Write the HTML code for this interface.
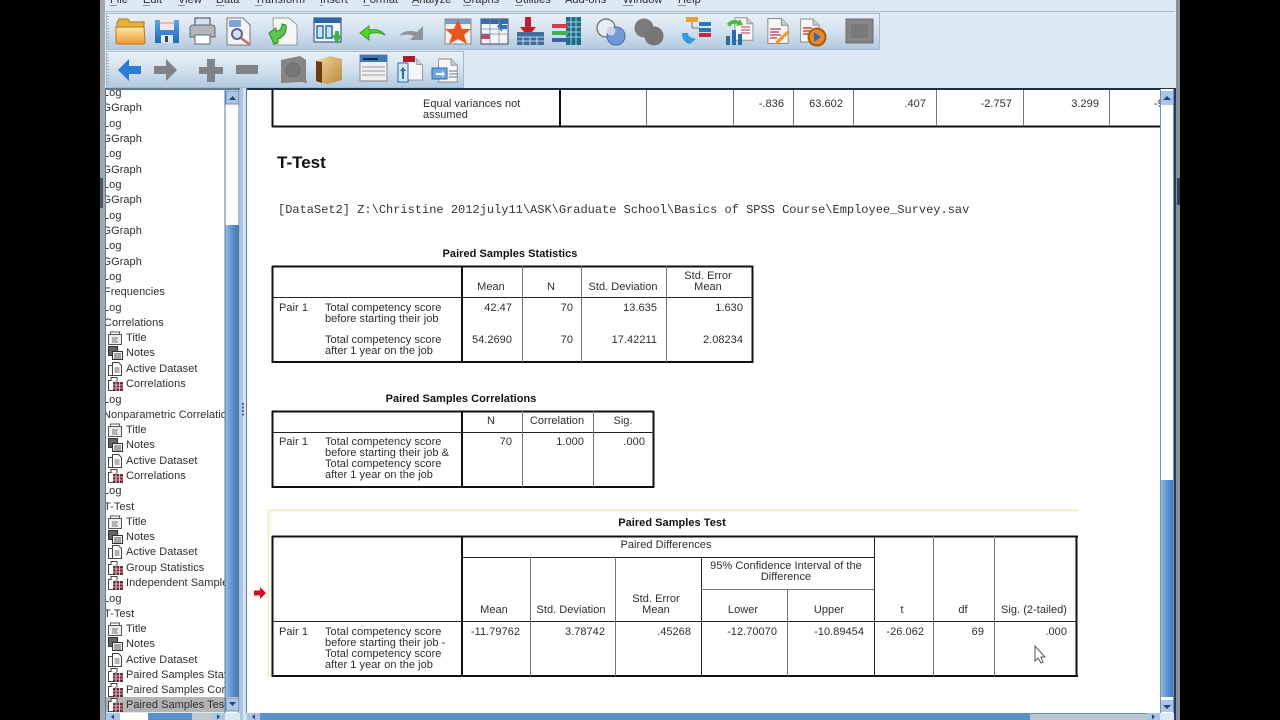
<!DOCTYPE html>
<html><head><meta charset="utf-8"><style>
html,body{margin:0;padding:0;background:#000;width:1280px;height:720px;overflow:hidden}
svg{display:block;filter:blur(.35px)}
text{font-family:"Liberation Sans",sans-serif;font-size:11px;fill:#2e2e2e;letter-spacing:.04px}
.e{text-anchor:end}.m{text-anchor:middle}
.b{font-weight:bold;fill:#111}
.k line{stroke:#111;stroke-width:2}
.h line{stroke:#222;stroke-width:1}
.g line{stroke:#777;stroke-width:1}
</style></head><body>
<svg width="1280" height="720" viewBox="0 0 1280 720" xmlns="http://www.w3.org/2000/svg">
<defs>
<linearGradient id="tb" x1="0" y1="0" x2="0" y2="1"><stop offset="0" stop-color="#e9f1f8"/><stop offset=".5" stop-color="#d3e1ee"/><stop offset="1" stop-color="#b2c9de"/></linearGradient>
<linearGradient id="sb" x1="0" y1="0" x2="1" y2="0"><stop offset="0" stop-color="#9cc0e2"/><stop offset=".5" stop-color="#5f95cd"/><stop offset="1" stop-color="#3f78b8"/></linearGradient>
<linearGradient id="or" x1="0" y1="0" x2="0" y2="1"><stop offset="0" stop-color="#ffe9a8"/><stop offset="1" stop-color="#f09a30"/></linearGradient>
<linearGradient id="bl" x1="0" y1="0" x2="0" y2="1"><stop offset="0" stop-color="#5aa6e6"/><stop offset="1" stop-color="#1f6ab4"/></linearGradient>
<linearGradient id="bk" x1="0" y1="0" x2="1" y2="1"><stop offset="0" stop-color="#f0d9a0"/><stop offset="1" stop-color="#b98a3e"/></linearGradient>
<symbol id="i-title" viewBox="0 0 16 14" width="16" height="14"><rect x="0.5" y="3.5" width="13" height="10" fill="#eee" stroke="#555"/><path d="M2.5 3.500V1h9v2.500" fill="none" stroke="#555"/><path d="M4 7h6M4 9h5M4 11h6" stroke="#777"/></symbol>
<symbol id="i-notes" viewBox="0 0 16 14" width="16" height="14"><rect x="0.5" y="0.5" width="9" height="9" fill="#666" stroke="#333"/><rect x="4.5" y="5.500" width="10" height="8" fill="#f4f4f4" stroke="#333"/><path d="M6 8h7M6 10h7M6 12h7" stroke="#555"/></symbol>
<symbol id="i-doc" viewBox="0 0 16 14" width="16" height="14"><rect x="0.5" y="3.500" width="7" height="10" fill="#fff" stroke="#444"/><path d="M4.500 11.500V0.500h6l3 3v10h-9z" fill="#fff" stroke="#444"/><path d="M6.500 6h5M6.500 8h5M6.500 10h5" stroke="#666"/></symbol>
<symbol id="i-tab" viewBox="0 0 16 14" width="16" height="14"><rect x="0.5" y="3.500" width="7" height="10" fill="#fff" stroke="#444"/><path d="M3 3.500V0.500h6v4" fill="#fff" stroke="#444"/><rect x="5" y="5" width="10" height="9" fill="#6e2a36"/><path d="M5 8h10M5 11h10M8 5v9M11.500 5v9" stroke="#f0d8dc" stroke-width=".8"/></symbol>
<symbol id="sheet" viewBox="0 0 26 28" width="26" height="28"><path d="M3 1h14l7 7v19H3z" fill="#f6f6f6" stroke="#8a8a8a"/><path d="M17 1v7h7" fill="#ccc" stroke="#8a8a8a"/></symbol>
</defs>

<rect width="1280" height="720" fill="#000"/>
<rect x="100" y="0" width="1080" height="720" fill="#dde9f4"/>
<rect x="100" y="0" width="5" height="720" fill="#a4a8ac"/>
<rect x="1176" y="0" width="4" height="720" fill="#8c9094"/>
<rect x="1174" y="88" width="2" height="632" fill="#223a66"/>
<rect x="1177" y="178" width="3" height="27" fill="#3c4048"/>
<rect x="100" y="178" width="3" height="30" fill="#555"/>

<!-- menu -->
<rect x="105" y="11" width="1070" height="1" fill="#a9bccd"/>
<text x="110" y="3">File</text><text x="143" y="3">Edit</text><text x="178" y="3">View</text><text x="216" y="3">Data</text><text x="255" y="3">Transform</text><text x="320" y="3">Insert</text><text x="363" y="3">Format</text><text x="412" y="3">Analyze</text><text x="463" y="3">Graphs</text><text x="515" y="3">Utilities</text><text x="565" y="3">Add-ons</text><text x="623" y="3">Window</text><text x="678" y="3">Help</text>
<path d="M110 5.500h7M143 5.500h7M178 5.500h7M216 5.500h8M255 5.500h7M320 5.500h3M363 5.500h7M412 5.500h7M463 5.500h8M515 5.500h8M623 5.500h10M678 5.500h8" stroke="#8a94a0"/>

<!-- toolbars -->
<rect x="106.500" y="13.500" width="773" height="36" fill="url(#tb)" stroke="#a8bacb"/>
<rect x="106.500" y="51.500" width="357" height="36" fill="url(#tb)" stroke="#a8bacb"/>
<path d="M108 16v31M108 54v31" stroke="#9db2c6" stroke-width="2" stroke-dasharray="1 2"/>

<!-- row 1 icons -->
<path d="M117 23l2-4h9l2 3h14v6h-27z" fill="#e8b13c" stroke="#a8761a"/><path d="M116 27h28l1 15a2 2 0 0 1-2 2h-25a2 2 0 0 1-2-2z" fill="url(#or)" stroke="#b8741a"/>
<path d="M155 20h24v23h-24z" fill="url(#bl)"/><rect x="160" y="19" width="14" height="11" fill="#f2e8e8"/><path d="M160 23h14" stroke="#d88"/><rect x="161" y="35" width="12" height="8" fill="#dfe6ee"/><rect x="165" y="36" width="3" height="6" fill="#345"/>
<path d="M195 18h15v9h-15z" fill="#cfe4f6" stroke="#445"/><path d="M190 28a3 3 0 0 1 3-3h19a3 3 0 0 1 3 3v9h-25z" fill="#b0b6bc" stroke="#666"/><rect x="195" y="35" width="15" height="9" fill="#fff" stroke="#666"/>
<path d="M227 18h16l7 7v20h-23z" fill="#f4f4f4" stroke="#777"/><rect x="229" y="20" width="12" height="7" fill="#7aa6d4"/><circle cx="237" cy="34" r="5" fill="#cfe2f6" stroke="#6a5a9a" stroke-width="2"/><path d="M241 38l8 6" stroke="#c2705a" stroke-width="2.400"/>
<path d="M273 18h16l8 7v20h-23z" fill="#f6f6f6" stroke="#999"/><path d="M269 33l7-5v3c4 0 6-2 6-7l4 1c1 8-3 12-8 14v4l-4 1z" fill="#5cc84a" stroke="#2f8a2a"/>
<rect x="314" y="18" width="27" height="24" fill="#f0f4f8" stroke="#22456e"/><rect x="314" y="18" width="27" height="5" fill="#2e64a8"/><path d="M317 26h6v12h-6zM326 26h6v12h-6z" fill="#cfe3f5" stroke="#1f6aa8" stroke-width="1.400"/><path d="M332 35h3v-4h4v4h3l-5 9-5-9z" fill="#3fb04a"/>
<path d="M360 33l9-7v4c7-1 12 0 16 5-6-3-10-3-16-1v6z" fill="#52d42c" stroke="#2f9e1e"/>
<path d="M423 26v14h-13l4-4c-5-2-9-2-15 0 4-5 10-6 18-4z" fill="#8f9498"/>
<rect x="445" y="19" width="26" height="25" fill="#f4eee8" stroke="#889"/><path d="M445 19h26v5h-26z" fill="#7a9cc6"/><path d="M458 19l4 10h9l-7 6 3 9-9-5-9 5 3-9-7-6h9z" fill="#e8561e"/>
<rect x="481" y="19" width="27" height="25" fill="#f4f4f8" stroke="#446"/><path d="M481 19h27v5h-27z" fill="#3a68a8"/><rect x="481" y="34" width="9" height="5" fill="#b84a6a"/><path d="M497 26l5-4v3h5v4h-5v3z" fill="#2a70c8"/><path d="M481 29h27M481 34h27M490 19v25M499 19v25" stroke="#7a8aa0" stroke-width=".8" fill="none"/>
<path d="M525 17h6v10h5l-8 10-8-10h5z" fill="#c81e28"/><rect x="517" y="32" width="27" height="13" fill="#3c6ea0"/><path d="M517 37h27M517 41h27M523 37v8M530 37v8M537 37v8" stroke="#e8f0f8" stroke-width=".8"/>
<rect x="566" y="17" width="15" height="28" fill="#1c6c8c"/><path d="M566 22h15M566 27h15M566 32h15M566 37h15M571 17v28M576 17v28" stroke="#bfe6ea" stroke-width=".8"/><rect x="552" y="24" width="16" height="4" fill="#d83a4a"/><rect x="552" y="31" width="16" height="4" fill="#44b04a"/><rect x="552" y="38" width="16" height="4" fill="#3a62b0"/>
<circle cx="606" cy="28" r="9" fill="#eef2f6" fill-opacity=".7" stroke="#778" stroke-width="1.400"/><circle cx="616" cy="36" r="9" fill="#6c92d8" stroke="#4a68a8" fill-opacity=".9"/><circle cx="611" cy="31" r="4.500" fill="#c9d8ee"/>
<circle cx="644" cy="28" r="9.500" fill="#7c7c7c"/><circle cx="654" cy="36" r="9.500" fill="#767676"/>
<rect x="686" y="17" width="12" height="5" fill="#e8a030"/><rect x="699" y="22" width="12" height="4" fill="#2a7ab8"/><rect x="699" y="28" width="12" height="4" fill="#2a7ab8"/><rect x="699" y="33" width="12" height="4" fill="#c82a3a"/><path d="M692 22v6M692 28h7" stroke="#777" fill="none"/><path d="M682 33a10 10 0 0 0 8 11l6-5-3-1c-4-1-5-3-5-5z" fill="#3a9ae0"/>
<use href="#sheet" x="732" y="17" width="23" height="24"/><rect x="726" y="36" width="4" height="9" fill="#2a6ca8"/><rect x="732" y="30" width="4" height="15" fill="#2a6ca8"/><rect x="738" y="34" width="4" height="11" fill="#2a6ca8"/><path d="M727 24c3-4 8-5 12-3l1-2 3 6-7 1 1-2c-3-1-6 0-7 3z" fill="#44c038"/><path d="M741 27h9M741 30h9M741 33h9" stroke="#b83a5a"/>
<use href="#sheet" x="765" y="17" width="25" height="28"/><path d="M770 29h11M770 32h9M770 35h11M770 38h7" stroke="#b8587a" stroke-width="1.400"/><path d="M776 41l12-11 2 2-11 11-4 1z" fill="#f09a28"/>
<use href="#sheet" x="798" y="17" width="23" height="27"/><path d="M803 28h9M803 31h9M803 34h7" stroke="#c84a2a" stroke-width="1.400"/><circle cx="817" cy="37" r="8.500" fill="#e88a20" stroke="#a85a10" stroke-width="2"/><path d="M814 32l7 5-7 5z" fill="#2a6ab8"/>
<rect x="846" y="19" width="27" height="24" fill="#858585" stroke="#6f6f6f"/><rect x="850" y="23" width="19" height="16" fill="#7a7a7a" stroke="#8e8e8e"/>

<!-- row 2 icons -->
<path d="M118 70l11-11v7h12v8h-12v7z" fill="#2a7cd8"/>
<path d="M177 70l-11-11v7h-12v8h12v7z" fill="#808488"/>
<path d="M207 59h8v8h8v7h-8v8h-8v-8h-8v-7h8z" fill="#808488"/>
<rect x="236" y="65" width="22" height="9" fill="#808488"/>
<path d="M281 60l19-4 6 4v19l1 4-6-1-20 1z" fill="#858585"/><circle cx="293" cy="70" r="7" fill="#777" stroke="#6a6a6a"/>
<path d="M316 61l14-5 12 3v21l-14 4-12-3z" fill="url(#bk)"/><path d="M316 61l6 1v21l-6-2z" fill="#6e3a14"/>
<rect x="360" y="55" width="27" height="26" fill="#f0f0f0" stroke="#888"/><rect x="360" y="55" width="27" height="7" fill="#3d78b8"/><rect x="363" y="58" width="15" height="2" fill="#102848"/><path d="M362 67h23M362 71h23M362 75h23" stroke="#99a"/>
<use href="#sheet" x="403" y="56" width="21" height="27"/><rect x="403" y="56" width="12" height="6" fill="#a81c2c"/><rect x="398" y="63" width="10" height="19" fill="#d6e8f8" stroke="#2a6ca8"/><path d="M403 67l-3 4h2v8h2v-8h2z" fill="#2a6ca8"/>
<use href="#sheet" x="436" y="57" width="23" height="27"/><rect x="432" y="68" width="15" height="11" fill="#6ca6dc" stroke="#2a6ca8"/><path d="M436 73h6v-2l3 3-3 3v-2h-6z" fill="#fff"/><path d="M449 71h8M449 74h8M449 77h8" stroke="#778"/>

<!-- outline pane -->
<rect x="105" y="90" width="120" height="622" fill="#fff"/>
<rect x="106" y="697" width="120" height="15" fill="#b4b4b4"/>
<g>
<text x="103" y="96">Log</text><text x="102.500" y="111">GGraph</text>
<text x="103" y="127">Log</text><text x="102.500" y="142">GGraph</text>
<text x="103" y="157">Log</text><text x="102.500" y="173">GGraph</text>
<text x="103" y="188">Log</text><text x="102.500" y="203">GGraph</text>
<text x="103" y="219">Log</text><text x="102.500" y="234">GGraph</text>
<text x="103" y="249">Log</text><text x="102.500" y="265">GGraph</text>
<text x="103" y="280">Log</text><text x="104" y="295">Frequencies</text>
<text x="103" y="311">Log</text><text x="104" y="326">Correlations</text>
<text x="126" y="341">Title</text><text x="126" y="356">Notes</text><text x="126" y="372">Active Dataset</text><text x="126" y="387">Correlations</text>
<text x="103" y="403">Log</text><text x="103" y="418">Nonparametric Correlations</text>
<text x="126" y="433">Title</text><text x="126" y="448">Notes</text><text x="126" y="464">Active Dataset</text><text x="126" y="479">Correlations</text>
<text x="103" y="494">Log</text><text x="104" y="510">T-Test</text>
<text x="126" y="525">Title</text><text x="126" y="540">Notes</text><text x="126" y="555">Active Dataset</text><text x="126" y="571">Group Statistics</text><text x="126" y="586">Independent Samples Test</text>
<text x="103" y="602">Log</text><text x="104" y="617">T-Test</text>
<text x="126" y="632">Title</text><text x="126" y="647">Notes</text><text x="126" y="663">Active Dataset</text><text x="126" y="678">Paired Samples Statistics</text><text x="126" y="693">Paired Samples Correlations</text><text x="126" y="708">Paired Samples Test</text>
</g>
<use href="#i-title" x="108" y="331"/><use href="#i-notes" x="108" y="346"/><use href="#i-doc" x="108" y="362"/><use href="#i-tab" x="108" y="377"/>
<use href="#i-title" x="108" y="423"/><use href="#i-notes" x="108" y="438"/><use href="#i-doc" x="108" y="454"/><use href="#i-tab" x="108" y="469"/>
<use href="#i-title" x="108" y="515"/><use href="#i-notes" x="108" y="530"/><use href="#i-doc" x="108" y="545"/><use href="#i-tab" x="108" y="561"/><use href="#i-tab" x="108" y="576"/>
<use href="#i-title" x="108" y="622"/><use href="#i-notes" x="108" y="637"/><use href="#i-doc" x="108" y="653"/><use href="#i-tab" x="108" y="668"/><use href="#i-tab" x="108" y="683"/><use href="#i-tab" x="108" y="698"/>
<rect x="100" y="88" width="6" height="632" fill="#a4a8ac"/>
<rect x="100" y="178" width="3" height="30" fill="#555"/>
<rect x="105" y="88" width="1" height="625" fill="#5c7c98"/>
<rect x="105" y="88" width="135" height="2" fill="#5c7c98"/>

<!-- outline v scrollbar -->
<rect x="225" y="90" width="16" height="623" fill="#fff"/>
<rect x="225" y="225" width="14" height="472" fill="url(#sb)"/>
<rect x="226" y="91" width="13" height="13" fill="#a9c6e8" stroke="#6c8cb0"/>
<rect x="226" y="698" width="13" height="13" fill="#a9c6e8" stroke="#6c8cb0"/>
<path d="M229 100h7l-3.500-4z" fill="#2a4468"/><path d="M229 702h7l-3.500 4z" fill="#2a4468"/>
<path d="M225 90v623M239 90v623" stroke="#5a7c9c"/>
<!-- splitter -->
<rect x="240" y="88" width="3" height="632" fill="#a9c8e4"/>
<rect x="243" y="88" width="4" height="632" fill="#d5e5f3"/>
<path d="M243 403v14" stroke="#4a6a8a" stroke-width="2" stroke-dasharray="2 1.500"/>
<!-- outline h scrollbar -->
<rect x="105" y="713" width="135" height="7" fill="#5a90c8"/>
<rect x="120" y="713" width="28" height="7" fill="#fff"/><rect x="192" y="713" width="20" height="7" fill="#c4c8cc"/>
<rect x="106" y="713" width="14" height="7" fill="#a9c6e8"/><rect x="212" y="713" width="13" height="7" fill="#a9c6e8"/><rect x="225" y="713" width="15" height="7" fill="#dce9f4"/>
<path d="M111 716.500l3-2v5zM220 716.500l-3-2v5z" fill="#2a4468"/>

<!-- content pane -->
<rect x="247" y="89" width="913" height="624" fill="#fff"/>
<rect x="246" y="88" width="930" height="2" fill="#1b2f52"/>
<rect x="246" y="88" width="1" height="625" fill="#5c7c98"/>

<!-- top table -->
<g class="k"><line x1="272.500" y1="90" x2="272.500" y2="127"/><line x1="272" y1="126.500" x2="1160" y2="126.500"/><line x1="560" y1="90" x2="560" y2="127"/></g>
<g class="g"><line x1="646.500" y1="90" x2="646.500" y2="126"/><line x1="733.500" y1="90" x2="733.500" y2="126"/><line x1="793.500" y1="90" x2="793.500" y2="126"/><line x1="853.500" y1="90" x2="853.500" y2="126"/><line x1="936.500" y1="90" x2="936.500" y2="126"/><line x1="1023.500" y1="90" x2="1023.500" y2="126"/><line x1="1109.500" y1="90" x2="1109.500" y2="126"/></g>
<text x="423" y="107">Equal variances not</text><text x="423" y="118">assumed</text>
<text class="e" x="784" y="107">-.836</text><text class="e" x="843" y="107">63.602</text><text class="e" x="926" y="107">.407</text><text class="e" x="1012" y="107">-2.757</text><text class="e" x="1099" y="107">3.299</text><text x="1154" y="107">-9</text>

<text class="b" x="277" y="168" style="font-size:17px;letter-spacing:0">T-Test</text>
<text x="278" y="213" style="font-family:'Liberation Mono',monospace;font-size:12px;letter-spacing:0;fill:#333">[DataSet2] Z:\Christine 2012july11\ASK\Graduate School\Basics of SPSS Course\Employee_Survey.sav</text>

<!-- table 2 -->
<text class="b m" x="510" y="257">Paired Samples Statistics</text>
<g class="k"><line x1="272" y1="266.500" x2="753" y2="266.500"/><line x1="272" y1="362" x2="753" y2="362"/><line x1="272.500" y1="266" x2="272.500" y2="363"/><line x1="752.500" y1="266" x2="752.500" y2="363"/><line x1="462" y1="266" x2="462" y2="363"/></g>
<g class="h"><line x1="272" y1="297.500" x2="753" y2="297.500"/></g>
<g class="g"><line x1="522.500" y1="266" x2="522.500" y2="362"/><line x1="581.500" y1="266" x2="581.500" y2="362"/><line x1="666.500" y1="266" x2="666.500" y2="362"/></g>
<text class="m" x="491" y="290">Mean</text><text class="m" x="551" y="290">N</text><text class="m" x="623" y="290">Std. Deviation</text><text class="m" x="708" y="279">Std. Error</text><text class="m" x="708" y="290">Mean</text>
<text x="279" y="311">Pair 1</text>
<text x="325" y="311">Total competency score</text><text x="325" y="322">before starting their job</text>
<text x="325" y="343">Total competency score</text><text x="325" y="354">after 1 year on the job</text>
<text class="e" x="512" y="311">42.47</text><text class="e" x="573" y="311">70</text><text class="e" x="657" y="311">13.635</text><text class="e" x="743" y="311">1.630</text>
<text class="e" x="512" y="343">54.2690</text><text class="e" x="573" y="343">70</text><text class="e" x="657" y="343">17.42211</text><text class="e" x="743" y="343">2.08234</text>

<!-- table 3 -->
<text class="b m" x="461" y="402">Paired Samples Correlations</text>
<g class="k"><line x1="272" y1="411.500" x2="654" y2="411.500"/><line x1="272" y1="487" x2="654" y2="487"/><line x1="272.500" y1="411" x2="272.500" y2="488"/><line x1="653.500" y1="411" x2="653.500" y2="488"/><line x1="462" y1="411" x2="462" y2="488"/></g>
<g class="h"><line x1="272" y1="432.500" x2="654" y2="432.500"/></g>
<g class="g"><line x1="522.500" y1="411" x2="522.500" y2="487"/><line x1="593.500" y1="411" x2="593.500" y2="487"/></g>
<text class="m" x="491" y="424">N</text><text class="m" x="557" y="424">Correlation</text><text class="m" x="623" y="424">Sig.</text>
<text x="279" y="445">Pair 1</text>
<text x="325" y="445">Total competency score</text><text x="325" y="456">before starting their job &amp;</text><text x="325" y="467">Total competency score</text><text x="325" y="478">after 1 year on the job</text>
<text class="e" x="512" y="445">70</text><text class="e" x="584" y="445">1.000</text><text class="e" x="645" y="445">.000</text>

<!-- selection -->
<path d="M268.500 677V510.500H1078" fill="none" stroke="#f0e8b0" stroke-width="1.500"/>
<rect x="269" y="511" width="3" height="166" fill="#fbfbf0"/>
<path d="M254 590.500h6v-3.500l6 6-6 6v-3.500h-6z" fill="#d0101e"/>

<!-- table 4 -->
<text class="b m" x="672" y="526">Paired Samples Test</text>
<g class="k"><line x1="272" y1="536.500" x2="1078" y2="536.500"/><line x1="272" y1="676" x2="1078" y2="676"/><line x1="272.500" y1="536" x2="272.500" y2="677"/><line x1="1076.500" y1="536" x2="1076.500" y2="677"/><line x1="462" y1="536" x2="462" y2="677"/></g>
<g class="h"><line x1="272" y1="621.500" x2="1077" y2="621.500"/><line x1="462" y1="557.500" x2="874" y2="557.500"/><line x1="874.500" y1="536" x2="874.500" y2="676"/><line x1="701.500" y1="557" x2="701.500" y2="676"/></g>
<g class="g"><line x1="530.500" y1="557" x2="530.500" y2="676"/><line x1="615.500" y1="557" x2="615.500" y2="676"/><line x1="787.500" y1="589" x2="787.500" y2="676"/><line x1="933.500" y1="536" x2="933.500" y2="676"/><line x1="994.500" y1="536" x2="994.500" y2="676"/><line x1="701" y1="589.500" x2="874" y2="589.500"/></g>
<text class="m" x="666" y="548">Paired Differences</text>
<text class="m" x="786" y="569">95% Confidence Interval of the</text><text class="m" x="786" y="580">Difference</text>
<text class="m" x="494" y="613">Mean</text><text class="m" x="571" y="613">Std. Deviation</text><text class="m" x="656" y="602">Std. Error</text><text class="m" x="656" y="613">Mean</text>
<text class="m" x="743" y="613">Lower</text><text class="m" x="829" y="613">Upper</text><text class="m" x="902" y="613">t</text><text class="m" x="963" y="613">df</text><text class="m" x="1034" y="613">Sig. (2-tailed)</text>
<text x="279" y="635">Pair 1</text>
<text x="325" y="635">Total competency score</text><text x="325" y="646">before starting their job -</text><text x="325" y="657">Total competency score</text><text x="325" y="668">after 1 year on the job</text>
<text class="e" x="520" y="635">-11.79762</text><text class="e" x="605" y="635">3.78742</text><text class="e" x="691" y="635">.45268</text><text class="e" x="777" y="635">-12.70070</text><text class="e" x="864" y="635">-10.89454</text><text class="e" x="924" y="635">-26.062</text><text class="e" x="984" y="635">69</text><text class="e" x="1067" y="635">.000</text>
<!-- cursor -->
<path d="M1035 646v15l3-3 3 5 2-1-2-5h4z" fill="#fff" stroke="#555"/>

<!-- right v scrollbar -->
<rect x="1160" y="89" width="14" height="624" fill="#fff"/>
<rect x="1160" y="480" width="14" height="217" fill="url(#sb)"/>
<rect x="1161" y="91" width="12" height="14" fill="#a9c6e8"/>
<rect x="1161" y="700" width="12" height="12" fill="#a9c6e8"/>
<path d="M1163 100h8l-4-4z" fill="#2a4468"/><path d="M1163 705h8l-4 4z" fill="#2a4468"/>
<path d="M1160.500 89v624M1173.500 89v624" stroke="#6a98b4"/>
<!-- bottom h scrollbar -->
<rect x="247" y="713" width="913" height="7" fill="#5a90c8"/>
<rect x="1030" y="714" width="118" height="6" fill="#bcc6d0"/>
<rect x="247" y="713" width="13" height="7" fill="#a9c6e8"/><rect x="1147" y="713" width="13" height="7" fill="#a9c6e8"/>
<rect x="1160" y="713" width="14" height="7" fill="#dce9f4"/>
<path d="M252 716.500l3-2v5zM1155 716.500l-3-2v5z" fill="#2a4468"/>
</svg>
</body></html>
